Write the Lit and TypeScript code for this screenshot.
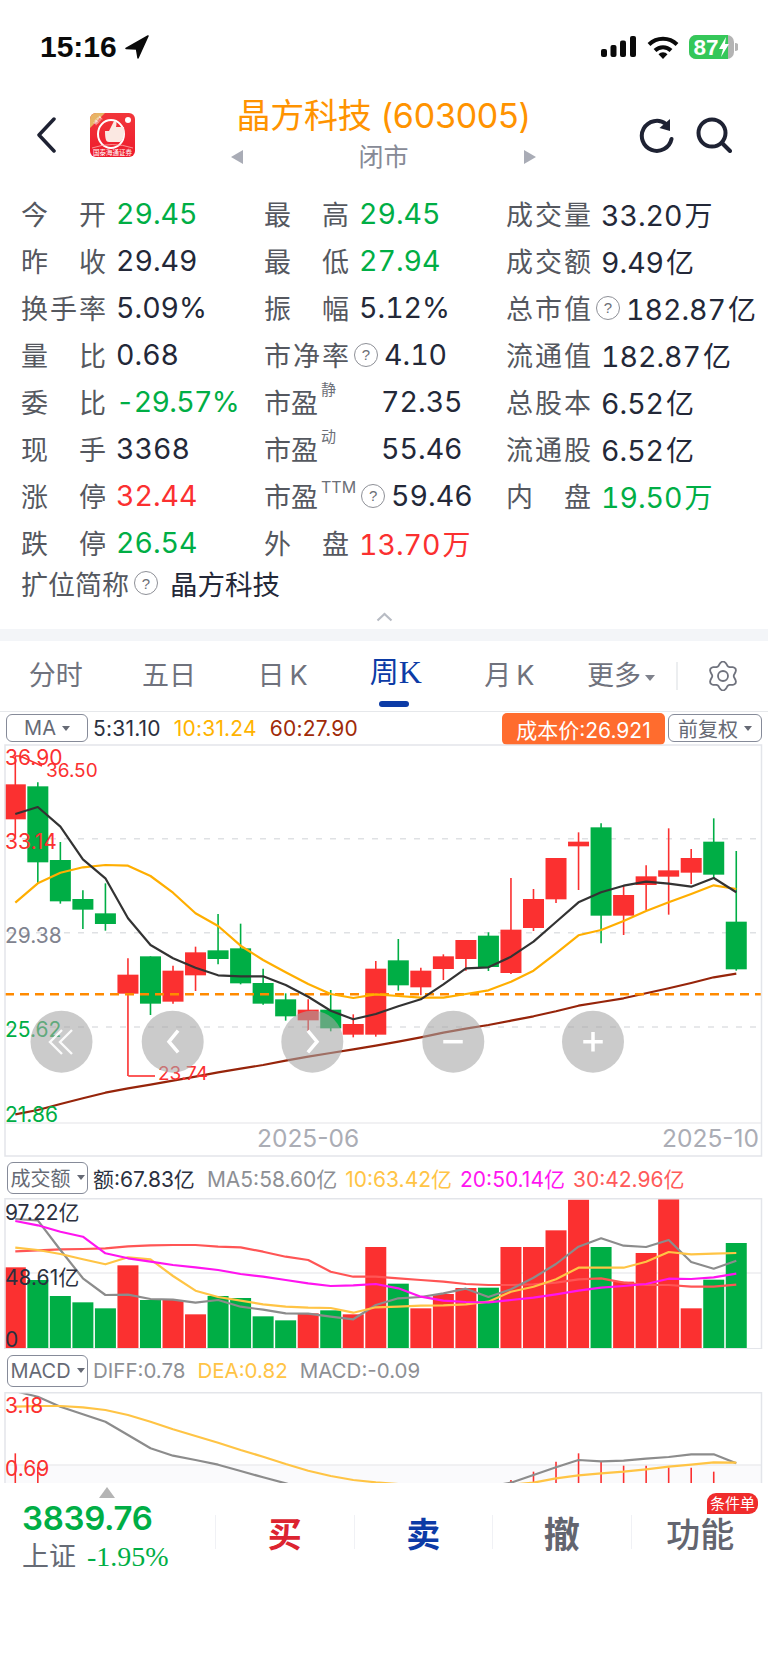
import { LitElement, css, html, svg } from 'lit';
import { customElement } from 'lit/decorators.js';

// all chart y values are read off the 3x crops, pts() converts them
const cx = (i: number) => 15.3 + 22.53 * i;
const pts = (ys: number[], off: number) => ys.map((y, i) => `${cx(i).toFixed(1)},${(y / 3 - off).toFixed(1)}`).join(' ');

// bodyTop, bodyBottom, wickTop, wickBottom, colour
type Candle = [number, number, number, number, 'r' | 'g'];
const CANDLES: Candle[] = [
  [133, 238, 48, 290, 'r'], [139, 367, 127, 430, 'g'], [360, 484, 306, 491, 'g'], [477, 509, 451, 567, 'g'],
  [520, 552, 430, 572, 'g'], [704, 761, 655, 1008, 'r'], [649, 791, 649, 825, 'g'], [692, 785, 677, 791, 'r'],
  [637, 706, 620, 753, 'r'], [631, 657, 522, 673, 'g'], [625, 730, 551, 733, 'g'], [729, 791, 686, 794, 'g'],
  [778, 829, 760, 842, 'g'], [809, 841, 778, 877, 'r'], [809, 865, 750, 874, 'g'], [852, 884, 823, 892, 'r'],
  [686, 884, 663, 890, 'r'], [661, 736, 597, 752, 'g'], [692, 742, 683, 766, 'r'], [649, 687, 643, 720, 'r'],
  [600, 657, 600, 692, 'r'], [587, 681, 577, 693, 'g'], [569, 699, 414, 702, 'r'], [477, 564, 447, 573, 'r'],
  [354, 478, 354, 489, 'r'], [305, 319, 277, 450, 'r'], [262, 527, 250, 610, 'g'], [465, 527, 437, 585, 'r'],
  [409, 435, 376, 510, 'r'], [391, 410, 265, 524, 'r'], [354, 398, 327, 432, 'r'], [305, 404, 235, 415, 'g'],
  [545, 688, 333, 692, 'g'],
];
const K_MA5 = [222, 201, 260, 358, 415, 535, 615, 655, 683, 706, 709, 709, 735, 770, 812, 838, 822, 799, 778, 733, 685, 682, 650, 605, 546, 487, 457, 437, 425, 431, 440, 414, 457];
const K_MA10 = [488, 430, 398, 382, 375, 377, 408, 458, 520, 558, 617, 660, 697, 732, 762, 774, 763, 768, 773, 773, 762, 751, 725, 692, 640, 586, 570, 543, 513, 487, 462, 436, 447];
const K_MA60 = [1123, 1110, 1092, 1075, 1058, 1045, 1034, 1022, 1010, 997, 986, 975, 962, 950, 939, 928, 917, 905, 892, 878, 866, 855, 842, 829, 814, 797, 786, 775, 760, 745, 729, 712, 701];

const BARS: [number, 'r' | 'g'][] = [
  [352, 'r'], [390, 'g'], [438, 'g'], [457, 'g'], [475, 'g'], [346, 'r'], [450, 'g'], [450, 'r'], [493, 'r'],
  [438, 'g'], [444, 'g'], [499, 'g'], [511, 'g'], [490, 'r'], [481, 'g'], [493, 'r'], [291, 'r'], [401, 'g'],
  [475, 'r'], [432, 'r'], [414, 'r'], [413, 'g'], [291, 'r'], [291, 'r'], [241, 'r'], [149, 'r'], [291, 'g'],
  [395, 'r'], [309, 'r'], [143, 'r'], [475, 'r'], [389, 'g'], [279, 'g'],
];
const V_MA5 = [207, 211, 300, 385, 435, 434, 447, 449, 458, 450, 470, 479, 490, 491, 500, 508, 465, 445, 441, 430, 416, 441, 418, 383, 342, 290, 265, 287, 291, 270, 336, 356, 332];
const V_MA10 = [293, 300, 312, 328, 343, 322, 328, 378, 422, 441, 452, 463, 470, 473, 474, 488, 472, 470, 467, 466, 463, 455, 425, 410, 388, 353, 353, 353, 335, 306, 313, 311, 309];
const V_MA20 = [213, 226, 245, 260, 310, 325, 335, 345, 352, 360, 372, 380, 390, 400, 408, 406, 402, 415, 440, 452, 456, 457, 450, 443, 433, 422, 413, 408, 402, 386, 387, 382, 371];
const V_MA30 = [304, 301, 298, 297, 295, 289, 286, 285, 285, 290, 292, 305, 320, 330, 365, 380, 380, 385, 390, 395, 402, 405, 405, 403, 398, 388, 385, 398, 405, 405, 410, 410, 404];

const DIFF = [124, 140, 170, 193, 215, 255, 295, 317, 330, 344, 363, 382, 400, 420, 440, 450, 455, 450, 440, 430, 420, 410, 398, 375, 352, 330, 334, 332, 326, 321, 313, 313, 340];
const DEA = [170, 168, 168, 172, 180, 195, 215, 238, 258, 278, 300, 320, 342, 362, 378, 390, 397, 402, 408, 412, 412, 408, 404, 398, 385, 376, 370, 365, 358, 350, 344, 337, 338];
// [slot, top of the stick]
const MACD: [number, number][] = [[0, 310], [1, 350], [22, 390], [23, 365], [24, 335], [25, 310], [26, 335], [27, 347], [28, 347], [29, 352], [30, 353], [31, 365]];

type Stat = { label: string; value?: string; unit?: string; tone?: string; help?: boolean; sup?: string; free?: boolean };
const STATS: Stat[] = [
  { label: '今开', value: '29.45', tone: 'up' }, { label: '最高', value: '29.45', tone: 'up' }, { label: '成交量', value: '33.20', unit: '万' },
  { label: '昨收', value: '29.49' }, { label: '最低', value: '27.94', tone: 'up' }, { label: '成交额', value: '9.49', unit: '亿' },
  { label: '换手率', value: '5.09%' }, { label: '振幅', value: '5.12%' }, { label: '总市值', value: '182.87', unit: '亿', help: true },
  { label: '量比', value: '0.68' }, { label: '市净率', value: '4.10', help: true }, { label: '流通值', value: '182.87', unit: '亿' },
  { label: '委比', value: '-29.57%', tone: 'up' }, { label: '市盈', sup: '静', value: '72.35', free: true }, { label: '总股本', value: '6.52', unit: '亿' },
  { label: '现手', value: '3368' }, { label: '市盈', sup: '动', value: '55.46', free: true }, { label: '流通股', value: '6.52', unit: '亿' },
  { label: '涨停', value: '32.44', tone: 'down' }, { label: '市盈', sup: 'TTM', value: '59.46', help: true, free: true }, { label: '内盘', value: '19.50', unit: '万', tone: 'up' },
  { label: '跌停', value: '26.54', tone: 'up' }, { label: '外盘', value: '13.70', unit: '万', tone: 'down' },
];

// six lobed outline for the settings button
const gearPath = () => {
  const out: string[] = [];
  for (let a = 0; a < 360; a += 6) {
    const t = (a * Math.PI) / 180;
    const r = 12.6 + 1.9 * Math.cos(6 * t);
    out.push(`${(15 + r * Math.sin(t)).toFixed(2)} ${(15 - r * Math.cos(t)).toFixed(2)}`);
  }
  return `M${out.join('L')}Z`;
};

@customElement('app-root')
export class AppRoot extends LitElement {
  static styles = css`
    :host {
      display: block;
      width: 768px;
      height: 1663px;
      overflow: hidden;
      background: #fff;
      color: #232838;
      font-family: Inter, "Noto Sans CJK SC", sans-serif;
    }
    svg { display: block; }

    .status { height: 94px; display: flex; align-items: center; justify-content: space-between; padding: 0 30px 0 40px; box-sizing: border-box; }
    .clock { display: flex; align-items: center; gap: 8px; font: 600 30px/1 "Liberation Sans", sans-serif; color: #0a0a0a; }
    .sys { display: flex; align-items: center; gap: 10px; }

    .head { height: 82px; display: flex; align-items: center; }
    .back { margin-left: 36px; }
    .logo { margin-left: 34px; }
    .mid { flex: 1; display: flex; flex-direction: column; align-items: center; margin-top: -2px; }
    .title { font-size: 34px; line-height: 40px; color: #ff9300; white-space: nowrap; letter-spacing: -0.25px; }
    .subrow { width: 306px; display: flex; align-items: center; justify-content: space-between; margin-top: 6px; }
    .sub { font-size: 25px; line-height: 30px; color: #878a96; }
    .tri-l { width: 0; height: 0; border: 7px solid transparent; border-left: 0; border-right: 12px solid #a9acb6; }
    .tri-r { width: 0; height: 0; border: 7px solid transparent; border-right: 0; border-left: 12px solid #a9acb6; }
    .tools { display: flex; gap: 21px; padding: 0 36px 0 7px; }

    .stats { display: grid; grid-template-columns: 243px 242px 1fr; grid-auto-rows: 47px; padding-left: 21px; margin-top: 14px; }
    .cell { display: flex; align-items: center; white-space: nowrap; }
    .lab { width: 85px; display: flex; justify-content: space-between; font-size: 27px; color: #55585f; }
    .lab.free { width: auto; justify-content: flex-start; }
    .val { font-size: 28.5px; margin-left: 10px; color: #232838; font-variant-numeric: tabular-nums; }
    .val i { font-style: normal; margin-left: 2px; font-size: 28px; }
    .val.far { margin-left: 45px; }
    .val.neg { letter-spacing: -0.7px; }
    .up { color: #00ae45; }
    .down { color: #fb3030; }
    .sup { font-size: 15px; line-height: 18px; color: #6d7078; align-self: flex-start; margin: 3px 0 0 3px; }
    .sup.wide { font-size: 16px; margin-top: 6px; }
    .help { width: 24px; height: 24px; box-sizing: border-box; border: 1.5px solid #8e9097; border-radius: 50%; display: flex; align-items: center; justify-content: center; font: 15px/1 "Liberation Sans", sans-serif; color: #6c6f76; margin-left: 5px; flex: none; }
    .help + .val { margin-left: 6px; }

    .short { height: 34px; display: flex; align-items: center; padding-left: 21px; }
    .short .lab { width: auto; gap: 1px; }
    .short .val { font-size: 27.5px; margin-left: 12px; }

    .fold { height: 28px; display: flex; justify-content: center; padding-top: 12px; box-sizing: border-box; }
    .band { height: 12px; margin-top: 1px; background: #f3f5f8; }

    .tabs { height: 70px; display: flex; align-items: center; }
    .tabgrid { display: grid; grid-template-columns: repeat(5, 113.4px) 110px; margin-left: -1px; }
    .tab { position: relative; text-align: center; font-size: 27px; line-height: 70px; color: #6f727d; white-space: nowrap; }
    .tab em { font-style: normal; margin-left: 5px; }
    .tab.on { color: #0c3ba6; font-size: 29px; line-height: 64px; }
    .tab.on b { font: 400 32px "Liberation Serif", serif; }
    .tab.on::after { content: ''; position: absolute; left: 40px; width: 30px; bottom: 4px; height: 6px; border-radius: 3px; background: #0c3ba6; }
    .caret { display: inline-block; width: 0; height: 0; border: 5px solid transparent; border-bottom: 0; border-top: 6px solid #7f828c; vertical-align: middle; margin-left: 4px; }
    .split { width: 2px; height: 28px; background: #eceef0; margin-right: 30px; }

    .bar { display: flex; align-items: center; font-size: 21px; white-space: nowrap; }
    .bar.top { height: 33px; border-top: 1px solid #e6e8eb; padding: 0 6px 0 6px; box-sizing: border-box; letter-spacing: 0.2px; }
    .bar.low { height: 41px; padding-left: 7px; }
    .bar.macd { height: 43px; padding-left: 7px; font-size: 20.5px; }
    .pill { height: 28px; box-sizing: border-box; border: 1.5px solid #868b99; border-radius: 6px; display: flex; align-items: center; justify-content: center; color: #666a75; flex: none; font-size: 20px; letter-spacing: 0; }
    .pill.ma { width: 82px; }
    .pill.wide { width: 81px; height: 32px; }
    .pill.fq { width: 94px; margin-left: 3px; }
    .bar .caret { border-top-color: #666a75; border-width: 4px; border-top-width: 5px; margin-left: 6px; }
    .t { margin-left: 5px; margin-right: 7px; }
    .top .t { margin-right: 8px; }
    .low .t { margin-right: 3px; }
    .low .t.dark { margin-right: 7px; }
    .cost { margin-left: auto; width: 163px; height: 32px; border-radius: 5px; background: #ff6c2e; color: #fff; display: flex; align-items: center; justify-content: center; margin-top: 1px; letter-spacing: 0; }
    .dark { color: #2b3040; }
    .c5 { color: #8d8f94; }
    .c10 { color: #ffb300; }
    .c10b { color: #ffc445; }
    .c60 { color: #a02a08; }
    .c20 { color: #ff14f0; }
    .c30 { color: #ff5a5a; }

    .k-text { font-size: 21px; dominant-baseline: central; }
    .k-small { font-size: 19px; dominant-baseline: central; }
    .axis { font-size: 24.5px; fill: #abadb5; dominant-baseline: central; }
    .rd { fill: #fb3030; }
    .gn { fill: #00ae45; }
    .gy { fill: #81838f; }
    .ink { fill: #2b3040; }
    .frame { fill: none; stroke: #e3e5ea; stroke-width: 1.5; }
    .grid { stroke: #dfe1e4; stroke-width: 1.5; stroke-dasharray: 6 8; }
    .plain { stroke: #ececef; stroke-width: 1.5; }
    .cost-line { stroke: #ff8a00; stroke-width: 2.5; stroke-dasharray: 9 6; }
    .wick-r { stroke: #fb3030; stroke-width: 1.6; }
    .wick-g { stroke: #00ae45; stroke-width: 1.6; }
    .ln { fill: none; stroke-width: 2.2; stroke-linejoin: round; }
    .l-k5 { stroke: #333; }
    .l-k10 { stroke: #ffae00; }
    .l-k60 { stroke: #96240a; }
    .l-5 { stroke: #8c8c8c; }
    .l-10 { stroke: #ffc445; }
    .l-20 { stroke: #ff14f0; }
    .l-30 { stroke: #ff5555; }
    .nav { fill: rgba(165, 165, 165, 0.58); }
    .nav-g { fill: none; stroke: #fff; stroke-width: 3.5; stroke-linecap: square; }
    .nav-t { fill: none; stroke: #fff; stroke-width: 2.4; opacity: 0.9; }
    .tint { fill: #fafafc; }
    .chart { height: 413px; }
    .vol { height: 151px; }
    .md { height: 91px; overflow: hidden; }

    .dock { position: relative; height: 180px; display: flex; background: #fff; }
    .idx { width: 215px; padding-left: 22px; box-sizing: border-box; flex: none; }
    .idx-tri { width: 0; height: 0; border: 8.5px solid transparent; border-top: 0; border-bottom: 11px solid #b4b4b4; margin: 4px 0 0 77px; }
    .idx-num { font-size: 33px; font-weight: 600; line-height: 40px; color: #00ae45; letter-spacing: -0.3px; }
    .idx-sub { display: flex; align-items: center; gap: 11px; margin-top: 1px; line-height: 36px; }
    .idx-sub b { font-weight: 400; font-size: 27px; color: #666b75; }
    .idx-sub i { font: 400 28px "Liberation Serif", serif; color: #00ae45; }
    .act { width: 138.5px; height: 34px; margin-top: 32px; border-left: 1.5px solid #f0f1f5; box-sizing: border-box; display: flex; align-items: center; justify-content: center; font-size: 34px; font-weight: 700; color: #63656f; flex: none; }
    .act.buy { color: #dc2430; }
    .act.sell { color: #0c3ba6; }
    .act.undo { font-size: 36px; font-weight: 600; }
    .act.fn { font-weight: 500; }
    .tag { position: absolute; left: 707px; top: 10px; width: 51px; height: 21px; background: #f02c2c; border-radius: 9px 9px 9px 0; color: #fff; font-size: 15px; line-height: 21px; text-align: center; }
  `;

  private renderStat(s: Stat) {
    const far = s.free && !s.help;
    const neg = s.value?.startsWith('-');
    return html`<div class="cell">
      <span class="lab ${s.free ? 'free' : ''}">${s.label.split('').map(c => html`<span>${c}</span>`)}</span>
      ${s.sup ? html`<span class="sup ${s.sup.length > 1 ? 'wide' : ''}">${s.sup}</span>` : ''}
      ${s.help ? html`<span class="help">?</span>` : ''}
      <span class="val ${s.tone || ''} ${far ? 'far' : ''} ${neg ? 'neg' : ''}">${s.value}${s.unit ? html`<i>${s.unit}</i>` : ''}</span>
    </div>`;
  }

  private renderStatusIcons() {
    return html`<div class="sys">
      <svg width="36" height="22" viewBox="0 0 36 22" fill="#0a0a0a">
        <rect x="0" y="13" width="6" height="8" rx="2"/><rect x="9.5" y="9" width="6" height="12" rx="2"/>
        <rect x="19" y="4.5" width="6" height="16.5" rx="2"/><rect x="29" y="0" width="6" height="21" rx="2"/>
      </svg>
      <svg width="32" height="23" viewBox="0 0 32 23">
        <path d="M2 8.5A20 20 0 0 1 30 8.5" fill="none" stroke="#0a0a0a" stroke-width="4"/>
        <path d="M8 14.5A11.5 11.5 0 0 1 24 14.5" fill="none" stroke="#0a0a0a" stroke-width="4"/>
        <path d="M11.5 18.2L16 23L20.5 18.2A6 6 0 0 0 11.5 18.2Z" fill="#0a0a0a"/>
      </svg>
      <svg width="49" height="24" viewBox="0 0 49 24">
        <rect width="45" height="24" rx="7" fill="#b4b4b4"/>
        <path d="M7 0H39V24H7A7 7 0 0 1 0 17V7A7 7 0 0 1 7 0Z" fill="#35c759"/>
        <path d="M46 8A4 4 0 0 1 46 16Z" fill="#b4b4b4"/>
        <text x="4.5" y="20" font-family="Liberation Sans" font-weight="700" font-size="22.5" fill="#fff">87</text>
        <path d="M37 2L30 14H34L32 22L40 9H36Z" fill="#fff"/>
      </svg>
    </div>`;
  }

  private renderLogo() {
    return html`<svg class="logo" width="45" height="44" viewBox="0 0 45 44">
      <defs>
        <linearGradient id="lg" x1="0" y1="0" x2="0" y2="1"><stop offset="0" stop-color="#f2363a"/><stop offset="1" stop-color="#ee1a2c"/></linearGradient>
      </defs>
      <rect width="45" height="44" rx="6" fill="url(#lg)"/>
      <path d="M0 15V6A6 6 0 0 1 6 0H15Z" fill="#e8b465"/>
      <text x="3.5" y="11" font-size="5" fill="#fff" transform="rotate(-45 6 9)">通财</text>
      <ellipse cx="21" cy="21" rx="13" ry="14" fill="none" stroke="#fff" stroke-width="2"/>
      <path d="M15 18H19L24 8C26.500 8 27 10.500 26 14H34C35 20 33 28 30 29H19C16 29 15 26 15 18Z" fill="#fbe8e2"/>
      <circle cx="38" cy="7" r="3" fill="#fff"/>
      <path d="M2 35Q22 28 43 35" fill="none" stroke="#f9b1ac" stroke-width="0.8"/>
      <text x="22.500" y="41.500" font-size="6.500" fill="#fff" text-anchor="middle">国泰海通证券</text>
    </svg>`;
  }

  private renderKChart() {
    return html`<div class="chart"><svg width="768" height="413" viewBox="0 0 768 413">
      ${[94.7, 188.7, 283].map(y => svg`<line class="grid" x1="8" x2="760" y1=${y} y2=${y}/>`)}
      <line class="plain" x1="5" x2="761" y1="379" y2="379"/>
      ${CANDLES.map(([t, b, wt, wb, c], i) => svg`
        <line class="wick-${c}" x1=${cx(i)} x2=${cx(i)} y1=${wt / 3 - 4} y2=${wb / 3 - 4}/>
        <rect class=${c === 'r' ? 'rd' : 'gn'} x=${cx(i) - 10.5} y=${t / 3 - 4} width="21" height=${(b - t) / 3}/>
      `)}
      <polyline class="ln l-k60" points=${pts(K_MA60, 4)}/>
      <line class="cost-line" x1="5" x2="761" y1="250.300" y2="250.300"/>
      <polyline class="ln l-k10" points=${pts(K_MA10, 4)}/>
      <polyline class="ln l-k5" points=${pts(K_MA5, 4)}/>
      <path class="wick-r" fill="none" d="M15.3 12H20L42 22"/>
      <path class="wick-r" fill="none" d="M128.300 332H155"/>
      <text class="k-text rd" x="5" y="13.500">36.90</text>
      <text class="k-small rd" x="46" y="26.500">36.50</text>
      <text class="k-text rd" x="5" y="97.500">33.14</text>
      <text class="k-text gy" x="5" y="191.500">29.38</text>
      <text class="k-text gn" x="5" y="285.500">25.62</text>
      <text class="k-text gn" x="5" y="370">21.86</text>
      <text class="k-small rd" x="158" y="329.500">23.74</text>
      <text class="axis" x="257" y="394">2025-06</text>
      <text class="axis" x="759" y="394" text-anchor="end">2025-10</text>
      ${[61.5, 172.7, 312.3, 453.3, 593].map(x => svg`<circle class="nav" cx=${x} cy="297.700" r="31"/>`)}
      <path class="nav-t" d="M62 286L50 298L62 310M72 286L60 298L72 310"/>
      <path class="nav-g" d="M177 288L169 297.700L177 307"/>
      <path class="nav-g" d="M309 288L317 297.700L309 307"/>
      <path class="nav-g" d="M445 297.700H461" stroke-width="5"/>
      <path class="nav-g" d="M585 297.700H601M593 289.700V305.700"/>
      <rect class="frame" x="5" y="1" width="756.500" height="411"/>
    </svg></div>`;
  }

  private renderVolume() {
    return html`<div class="vol"><svg width="768" height="151" viewBox="0 0 768 151">
      <line class="plain" x1="5" x2="761" y1="75" y2="75"/>
      ${BARS.map(([t, c], i) => svg`<rect class=${c === 'r' ? 'rd' : 'gn'} x=${cx(i) - 10.500} y=${t / 3 - 48} width="21" height=${151 - (t / 3 - 48)}/>`)}
      <polyline class="ln l-30" points=${pts(V_MA30, 48)}/>
      <polyline class="ln l-5" points=${pts(V_MA5, 48)}/>
      <polyline class="ln l-10" points=${pts(V_MA10, 48)}/>
      <polyline class="ln l-20" points=${pts(V_MA20, 48)}/>
      <text class="k-text ink" x="5" y="14.500">97.22亿</text>
      <text class="k-text ink" x="5" y="79">48.61亿</text>
      <text class="k-text ink" x="5" y="141">0</text>
      <rect class="frame" x="5" y="0.750" width="756.500" height="150"/>
    </svg></div>`;
  }

  private renderMacd() {
    return html`<div class="md"><svg width="768" height="91" viewBox="0 0 768 91">
      <rect class="tint" x="5" y="73" width="757" height="18"/>
      <line class="plain" x1="5" x2="761" y1="73" y2="73"/>
      ${MACD.map(([i, t]) => svg`<line class="wick-r" x1=${cx(i)} x2=${cx(i)} y1=${t / 3 - 42} y2="95"/>`)}
      <polyline class="ln l-5" points=${pts(DIFF, 42)}/>
      <polyline class="ln l-10" points=${pts(DEA, 42)}/>
      <text class="k-text rd" x="5" y="13">3.18</text>
      <text class="k-text rd" x="5" y="76">0.69</text>
      <rect class="frame" x="5" y="0.750" width="756.500" height="100"/>
    </svg></div>`;
  }

  render() {
    return html`
      <div class="status">
        <div class="clock">15:16
          <svg width="24" height="24" viewBox="0 0 24 24"><path d="M23 1L1 13.500L11.500 14L13 23Z" fill="#0a0a0a" stroke="#0a0a0a" stroke-width="1.500" stroke-linejoin="round"/></svg>
        </div>
        ${this.renderStatusIcons()}
      </div>

      <div class="head">
        <svg class="back" width="20" height="36" viewBox="0 0 20 36"><path d="M18 2L3 18L18 34" fill="none" stroke="#1e2233" stroke-width="3.500" stroke-linecap="round" stroke-linejoin="round"/></svg>
        ${this.renderLogo()}
        <div class="mid">
          <div class="title">晶方科技 (603005)</div>
          <div class="subrow"><span class="tri-l"></span><span class="sub">闭市</span><span class="tri-r"></span></div>
        </div>
        <div class="tools">
          <svg width="36" height="36" viewBox="0 0 36 36">
            <path d="M32.500 22A15 15 0 1 1 27 7" fill="none" stroke="#1e2233" stroke-width="4" stroke-linecap="round"/>
            <path d="M31 2V14L20.500 11Z" fill="#1e2233"/>
          </svg>
          <svg width="36" height="36" viewBox="0 0 36 36">
            <circle cx="16" cy="16" r="13.500" fill="none" stroke="#1e2233" stroke-width="4"/>
            <path d="M26 26L34 34" stroke="#1e2233" stroke-width="4" stroke-linecap="round"/>
          </svg>
        </div>
      </div>

      <div class="stats">${STATS.map(s => this.renderStat(s))}</div>
      <div class="short">
        <span class="lab free">扩位简称</span><span class="help">?</span><span class="val">晶方科技</span>
      </div>
      <div class="fold"><svg width="17" height="10" viewBox="0 0 17 10"><path d="M1.500 8.500L8.500 2L15.500 8.500" fill="none" stroke="#b8bcc4" stroke-width="2.200"/></svg></div>
      <div class="band"></div>

      <div class="tabs">
        <div class="tabgrid">
          <div class="tab">分时</div>
          <div class="tab">五日</div>
          <div class="tab">日<em>K</em></div>
          <div class="tab on">周<b>K</b></div>
          <div class="tab">月<em>K</em></div>
          <div class="tab">更多<span class="caret"></span></div>
        </div>
        <div class="split"></div>
        <svg width="30" height="30" viewBox="0 0 30 30">
          <path d=${gearPath()} fill="none" stroke="#6f727d" stroke-width="1.800"/>
          <circle cx="15" cy="15" r="5" fill="none" stroke="#6f727d" stroke-width="1.800"/>
        </svg>
      </div>

      <div class="bar top">
        <div class="pill ma">MA<span class="caret"></span></div>
        <span class="t dark">5:31.10</span>
        <span class="t c10">10:31.24</span>
        <span class="t c60">60:27.90</span>
        <div class="cost">成本价:26.921</div>
        <div class="pill fq">前复权<span class="caret"></span></div>
      </div>
      ${this.renderKChart()}

      <div class="bar low">
        <div class="pill wide">成交额<span class="caret"></span></div>
        <span class="t dark">额:67.83亿</span>
        <span class="t c5">MA5:58.60亿</span>
        <span class="t c10b">10:63.42亿</span>
        <span class="t c20">20:50.14亿</span>
        <span class="t c30">30:42.96亿</span>
      </div>
      ${this.renderVolume()}

      <div class="bar macd">
        <div class="pill wide">MACD<span class="caret"></span></div>
        <span class="t c5">DIFF:0.78</span>
        <span class="t c10b">DEA:0.82</span>
        <span class="t c5">MACD:-0.09</span>
      </div>
      ${this.renderMacd()}

      <div class="dock">
        <div class="idx">
          <div class="idx-tri"></div>
          <div class="idx-num">3839.76</div>
          <div class="idx-sub"><b>上证</b><i>-1.95%</i></div>
        </div>
        <div class="act buy">买</div>
        <div class="act sell">卖</div>
        <div class="act undo">撤</div>
        <div class="act fn">功能</div>
        <div class="tag">条件单</div>
      </div>
    `;
  }
}
